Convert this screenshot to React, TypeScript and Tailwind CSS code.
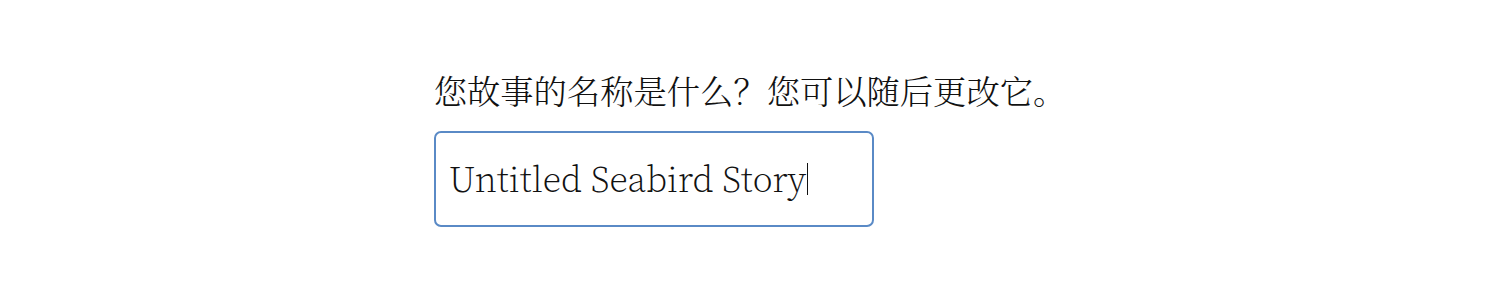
export default function App() {
  return (
    <div className="flex h-[300px] w-full justify-center bg-white pt-[70px] font-['Source_Serif_4','Noto_Serif_CJK_SC',serif] text-[#111]">
      <div className="flex w-fit flex-col">
        <label htmlFor="story-title" className="text-[33.3px] font-light leading-[46px]">
          您故事的名称是什么？您可以随后更改它。
        </label>
        <div className="mt-[15px] flex h-[96px] w-[440px] items-center rounded-[7px] border-2 border-[#5a8ac6] pl-[13px]">
          <span id="story-title" className="text-[36.5px] font-light">
            Untitled Seabird Story
          </span>
          <span className="ml-[1px] h-[32px] w-px bg-[#111]" />
        </div>
      </div>
    </div>
  );
}
